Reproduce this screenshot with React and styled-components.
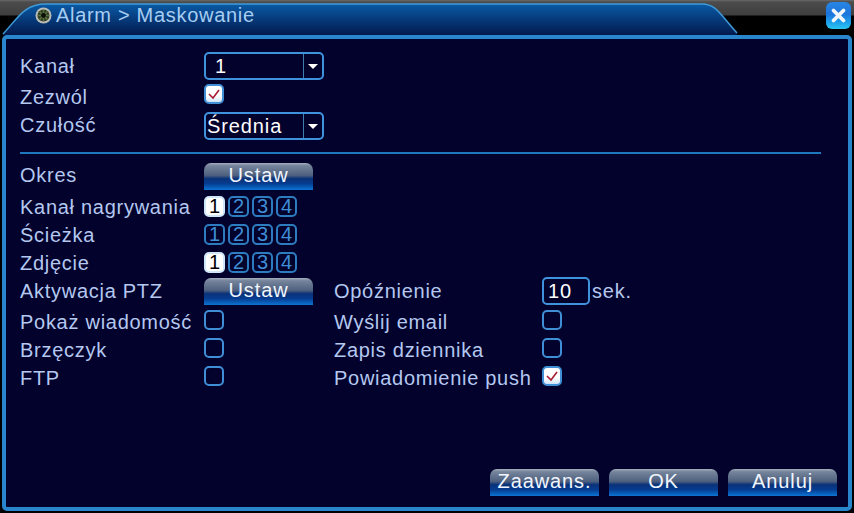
import React from 'react';
import styled, { createGlobalStyle } from 'styled-components';

const GlobalStyle = createGlobalStyle`
  html, body {
    margin: 0;
    padding: 0;
    background: #000;
  }
`;

const Screen = styled.div`
  width: 854px;
  height: 513px;
  overflow: hidden;
  display: flex;
  flex-direction: column;
  background: #000;
  font-family: 'Liberation Sans', Arial, sans-serif;
`;

/* ---- title bar ---- */

const TitleBar = styled.div`
  position: relative;
  height: 35px;
  flex: none;
  display: flex;
  align-items: flex-start;
  padding: 5px 0 0 35px;
  box-sizing: border-box;
  background: linear-gradient(#6a6a6a 0, #4c4c4c 2px, #3e3e3e 15px, #000 16px);
`;

const TabShape = styled.svg`
  position: absolute;
  left: 0;
  top: 0;
`;

const TitleIcon = styled.svg`
  position: relative;
  flex: none;
  margin-top: 2px;
`;

const TitleText = styled.span`
  position: relative;
  margin-left: 4px;
  font-size: 20px;
  line-height: 20px;
  letter-spacing: 0.7px;
  color: #a6cdf2;
  white-space: nowrap;
`;

const CloseButton = styled.div`
  position: absolute;
  left: 826px;
  top: 2px;
  width: 25px;
  height: 27px;
  border-radius: 6px;
  display: flex;
  align-items: center;
  justify-content: center;
  background: linear-gradient(#2a86e4 0, #1a74dc 45%, #1ea4ec 78%, #2cc6f2 100%);
`;

/* ---- main panel ---- */

const Panel = styled.div`
  flex: 1;
  margin: 0 2px 2px 2px;
  border: 4px solid #2a86cc;
  border-radius: 5px;
  background: #02022c;
  display: flex;
  flex-direction: column;
  padding: 12px 0 0 14px;
  box-sizing: border-box;
  position: relative;
`;

const Row = styled.div`
  display: flex;
  align-items: center;
  height: ${(p) => p.$h}px;
  flex: none;
  margin-bottom: ${(p) => p.$mb || 0}px;
`;

/* $down / $up move the text off the row's centre line, as on the real OSD */
const Label = styled.span`
  width: ${(p) => p.$w || 184}px;
  flex: none;
  font-size: 20px;
  line-height: 22px;
  letter-spacing: 0.72px;
  color: #b4c8f0;
  white-space: nowrap;
  margin-top: ${(p) => p.$down || 0}px;
  margin-bottom: ${(p) => p.$up || 0}px;
`;

const Divider = styled.div`
  height: 2px;
  width: 801px;
  flex: none;
  margin: 12px 0 8px 0;
  background: #1f78bd;
`;

const Select = styled.div`
  width: 120px;
  height: 28px;
  box-sizing: border-box;
  border: 2px solid #3f92dc;
  border-radius: 5px;
  display: flex;
  align-items: center;
  color: #fff;
  font-size: 20px;
  letter-spacing: 0.9px;
`;

const SelectValue = styled.span`
  flex: 1;
  padding-left: ${(p) => p.$pad}px;
`;

const SelectArrow = styled.div`
  width: 18px;
  height: 100%;
  flex: none;
  border-left: 1px solid #3f7cb0;
  display: flex;
  align-items: center;
  justify-content: center;

  &::after {
    content: '';
    border-left: 5px solid transparent;
    border-right: 5px solid transparent;
    border-top: 5px solid #fff;
  }
`;

const Check = styled.div`
  width: 20px;
  height: 20px;
  flex: none;
  box-sizing: border-box;
  border: 2px solid #3f8ed6;
  border-radius: 5px;
  background: ${(p) => (p.$on ? 'linear-gradient(#fff 60%, #cfe4f6)' : 'transparent')};
  display: flex;
  align-items: center;
  justify-content: center;
  margin-bottom: ${(p) => p.$up || 0}px;
`;

const ActionButton = styled.div`
  width: 109px;
  height: 27px;
  flex: none;
  box-sizing: border-box;
  border-radius: 7px 7px 0 0;
  display: flex;
  align-items: center;
  justify-content: center;
  padding-bottom: 2px;
  color: #f0f6ff;
  font-size: 20px;
  letter-spacing: 0.9px;
  background: linear-gradient(
    #a4aebc 0,
    #76859c 10%,
    #4e607e 46%,
    #0a3278 58%,
    #063c90 76%,
    #0c74d4 100%
  );
`;

const ChipGroup = styled.div`
  display: flex;
  gap: 3px;
`;

const Chip = styled.div`
  width: 21px;
  height: 21px;
  box-sizing: border-box;
  border: 2px solid ${(p) => (p.$on ? '#cfe6fa' : '#2e7cc0')};
  border-radius: 5px;
  background: ${(p) => (p.$on ? '#fff' : 'transparent')};
  color: ${(p) => (p.$on ? '#000' : '#3f8ed6')};
  font-size: 20px;
  line-height: 17px;
  text-align: center;
`;

const MidGap = styled.div`
  width: ${(p) => p.$w}px;
  flex: none;
`;

const NumberBox = styled.div`
  width: 48px;
  height: 28px;
  flex: none;
  box-sizing: border-box;
  border: 2px solid #3f92dc;
  border-radius: 5px;
  color: #fff;
  font-size: 20px;
  letter-spacing: 0.9px;
  line-height: 24px;
  padding-left: 4px;
`;

const Unit = styled.span`
  margin-left: 2px;
  font-size: 20px;
  letter-spacing: 0.8px;
  color: #b4c8f0;
`;

const Footer = styled.div`
  display: flex;
  gap: 10px;
  margin-top: auto;
  margin-bottom: 11px;
  margin-left: 470px;
`;

const CheckMark = () => (
  <svg width="14" height="12" viewBox="0 0 14 12">
    <path d="M2 6 L6 10 L12 2" fill="none" stroke="#a81c34" strokeWidth="1.6" />
  </svg>
);

const Chips = ({ on }) => (
  <ChipGroup>
    {[1, 2, 3, 4].map((n) => (
      <Chip key={n} $on={n === on}>{n}</Chip>
    ))}
  </ChipGroup>
);

const Toggle = ({ on, up }) => (
  <Check $on={on} $up={up}>{on && <CheckMark />}</Check>
);

const SPOKES = [0, 45, 90, 135];

export default function App() {
  return (
    <Screen>
      <GlobalStyle />
      <TitleBar>
        <TabShape width="740" height="35" viewBox="0 0 740 35">
          <defs>
            <linearGradient id="tab" x1="0" y1="0" x2="0" y2="1">
              <stop offset="0" stopColor="#0a5aa6" />
              <stop offset="0.5" stopColor="#063a7a" />
              <stop offset="1" stopColor="#021a4e" />
            </linearGradient>
          </defs>
          <path
            d="M3 34 C 18 18, 24 4, 46 4 L 702 4 C 716 4, 720 14, 737 33 L 737 35 L 3 35 Z"
            fill="url(#tab)"
          />
          <path
            d="M3 34 C 18 18, 24 4, 46 4 L 702 4 C 716 4, 720 14, 737 33"
            fill="none"
            stroke="#3f9ad8"
            strokeWidth="1.5"
          />
        </TabShape>
        <TitleIcon width="17" height="17" viewBox="0 0 17 17">
          <circle cx="8.5" cy="8.5" r="8" fill="#b8bcb4" />
          <circle cx="8.5" cy="8.5" r="6" fill="#2c3a20" />
          {SPOKES.map((deg) => (
            <rect key={deg} x="7.7" y="3" width="1.6" height="11" fill="#5c7040" transform={`rotate(${deg} 8.5 8.5)`} />
          ))}
          <circle cx="8.5" cy="8.5" r="2.4" fill="#0a0f08" />
        </TitleIcon>
        <TitleText>Alarm &gt; Maskowanie</TitleText>
        <CloseButton>
          <svg width="17" height="17" viewBox="0 0 17 17">
            <path d="M3.5 3.5 L13.5 13.5 M13.5 3.5 L3.5 13.5" stroke="#eef6fb" strokeWidth="3.8" strokeLinecap="round" />
          </svg>
        </CloseButton>
      </TitleBar>

      <Panel>
        <Row $h={30}>
          <Label>Kanał</Label>
          <Select>
            <SelectValue $pad={9}>1</SelectValue>
            <SelectArrow />
          </Select>
        </Row>
        <Row $h={31}>
          <Label>Zezwól</Label>
          <Toggle on up={5} />
        </Row>
        <Row $h={28}>
          <Label $up={2}>Czułość</Label>
          <Select>
            <SelectValue $pad={1}>Średnia</SelectValue>
            <SelectArrow />
          </Select>
        </Row>
        <Divider />
        <Row $h={29} $mb={1}>
          <Label $up={3}>Okres</Label>
          <ActionButton>Ustaw</ActionButton>
        </Row>
        <Row $h={28}>
          <Label $down={2}>Kanał nagrywania</Label>
          <Chips on={1} />
        </Row>
        <Row $h={28}>
          <Label $down={2}>Ścieżka</Label>
          <Chips />
        </Row>
        <Row $h={28}>
          <Label $down={2}>Zdjęcie</Label>
          <Chips on={1} />
        </Row>
        <Row $h={30}>
          <Label>Aktywacja PTZ</Label>
          <ActionButton>Ustaw</ActionButton>
          <MidGap $w={21} />
          <Label $w={208}>Opóźnienie</Label>
          <NumberBox>10</NumberBox>
          <Unit>sek.</Unit>
        </Row>
        <Row $h={28}>
          <Label $down={4}>Pokaż wiadomość</Label>
          <Toggle />
          <MidGap $w={110} />
          <Label $w={208} $down={4}>Wyślij email</Label>
          <Toggle />
        </Row>
        <Row $h={28}>
          <Label $down={4}>Brzęczyk</Label>
          <Toggle />
          <MidGap $w={110} />
          <Label $w={208} $down={4}>Zapis dziennika</Label>
          <Toggle />
        </Row>
        <Row $h={28}>
          <Label $down={4}>FTP</Label>
          <Toggle />
          <MidGap $w={110} />
          <Label $w={208} $down={4}>Powiadomienie push</Label>
          <Toggle on />
        </Row>
        <Footer>
          <ActionButton>Zaawans.</ActionButton>
          <ActionButton>OK</ActionButton>
          <ActionButton>Anuluj</ActionButton>
        </Footer>
      </Panel>
    </Screen>
  );
}
